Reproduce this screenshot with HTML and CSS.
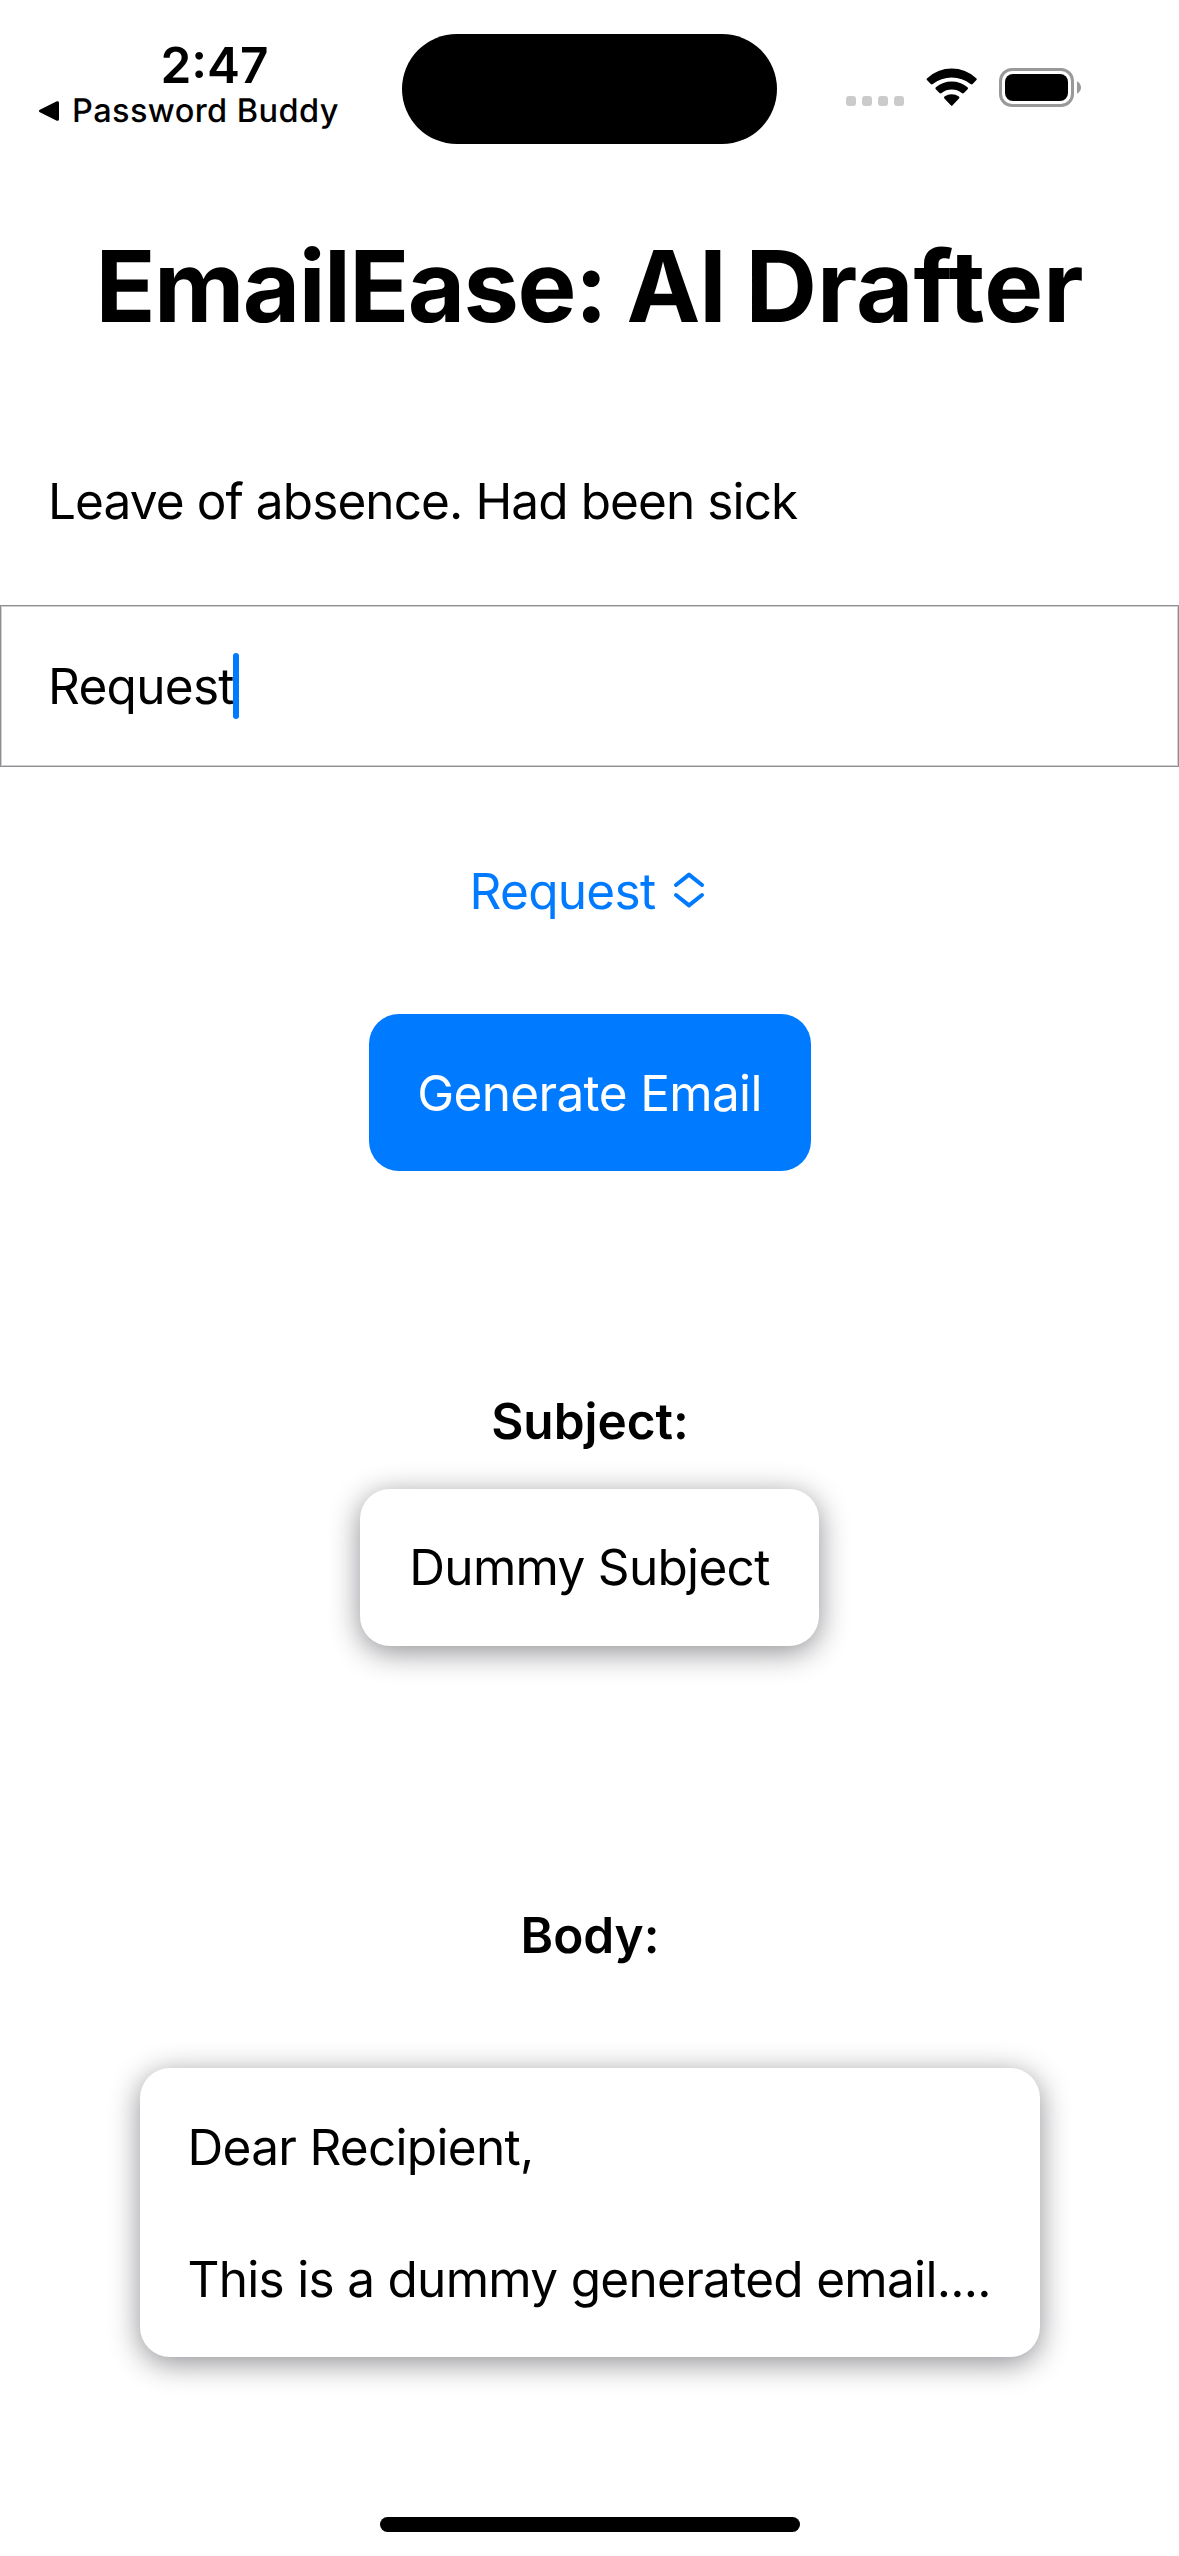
FILE: index.html
```
<!DOCTYPE html>
<html lang="en">
<head>
<meta charset="utf-8">
<title>EmailEase: AI Drafter</title>
<link rel="stylesheet" href="styles.css">
</head>
<body>
<div class="screen">
  <header class="status-bar">
    <div class="status-left">
      <div class="clock">2:47</div>
      <div class="back-link">
        <svg class="back-arrow" viewBox="0 0 22 22"><path d="M2.5 11 19.5 2.7V19.3Z" fill="#000" stroke="#000" stroke-width="3" stroke-linejoin="round"/></svg>
        <span>Password Buddy</span>
      </div>
    </div>
    <div class="island"></div>
    <div class="status-icons">
      <svg class="signal" viewBox="0 0 58 10" fill="#cbcbcb"><rect width="10" height="10" rx="3"/><rect x="16" width="10" height="10" rx="3"/><rect x="32" width="10" height="10" rx="3"/><rect x="48" width="10" height="10" rx="3"/></svg>
      <svg class="wifi" viewBox="926 68 51 39">
        <path d="M927.2 80.3Q926 79.2 927.2 78.2A36 36 0 0 1 976.2 78.2Q977.4 79.2 976.2 80.3L972.6 84Q971.7 84.9 970.6 84A30.6 30.6 0 0 0 932.8 84Q931.7 84.9 930.8 84Z"/>
        <path d="M935.8 89.2Q934.8 88.1 935.9 87.2A24.5 24.5 0 0 1 967.5 87.2Q968.6 88.1 967.6 89.2L963.9 93Q962.9 93.9 961.8 93A16.5 16.5 0 0 0 941.6 93Q940.5 93.9 939.5 93Z"/>
        <path d="M944.4 98.4Q943.4 97.4 944.5 96.6A12 12 0 0 1 958.9 96.6Q960 97.4 959 98.4L952.6 105.2Q951.7 106.2 950.8 105.2Z"/>
      </svg>
      <svg class="battery" viewBox="0 0 83 39"><rect x="1.5" y="1.5" width="72" height="36" rx="11.5" fill="none" stroke="#999" stroke-width="3"/><rect x="6" y="6" width="63" height="27" rx="8"/><path d="M78 13.2Q82 15.5 82 19.5T78 25.8Z" fill="#999"/></svg>
    </div>
  </header>

  <main class="content">
    <h1 class="title">EmailEase: AI <span class="title-end">Drafter</span></h1>
    <p class="prompt">Leave of absence. Had been sick</p>
    <div class="field"><span>Request</span><i class="caret"></i></div>
    <div class="picker">
      <span>Request</span>
      <svg class="chevrons" viewBox="0 0 32 36" fill="none" stroke="#007aff" stroke-width="4" stroke-linecap="round" stroke-linejoin="round"><path d="M3 13 16 2.6 29 13M3 23 16 33.4 29 23"/></svg>
    </div>
    <button class="generate">Generate Email</button>
    <h2 class="label label-subject">Subject:</h2>
    <div class="card card-subject">Dummy Subject</div>
    <h2 class="label label-body">Body:</h2>
    <div class="card card-body">Dear Recipient,<br><br>This is a dummy generated email....</div>
  </main>

  <div class="home-indicator"></div>
</div>
</body>
</html>
```
FILE: styles.css
```
* {
  box-sizing: border-box;
  margin: 0;
}

body {
  background: #fff;
  color: #000;
  font: 400 49.5px/66px Inter, sans-serif;
  letter-spacing: -0.7px;
  text-rendering: geometricPrecision;
}

.screen {
  width: 1179px;
  height: 2556px;
  display: flex;
  flex-direction: column;
  align-items: center;
  overflow: hidden;
}

.status-bar {
  width: 100%;
  height: 177px;
  display: flex;
  align-items: flex-start;
}

.status-left {
  width: 402px;
  padding: 35px 0 0 38px;
}

.clock {
  width: 353px;
  text-align: center;
  font-weight: 600;
  line-height: 60px;
  letter-spacing: 0;
}

.back-link {
  display: flex;
  align-items: center;
  gap: 12px;
  font-size: 32.5px;
  font-weight: 500;
  line-height: 32px;
  letter-spacing: 0.42px;
  white-space: nowrap;
}

.back-arrow {
  width: 22px;
  height: 22px;
}

.island {
  width: 375px;
  height: 110px;
  margin-top: 34px;
  border-radius: 55px;
  background: #000;
}

.status-icons {
  display: flex;
  align-items: flex-end;
  margin: 68px 0 0 69px;
}

.signal {
  width: 58px;
  height: 10px;
  margin-bottom: 1px;
}

.wifi {
  width: 51px;
  height: 39px;
  margin: 0 22px;
}

.battery {
  width: 83px;
  height: 39px;
}

.content {
  width: 100%;
  display: flex;
  flex-direction: column;
  align-items: center;
}

.title {
  margin-top: 49px;
  font-size: 99px;
  font-weight: 700;
  line-height: 120px;
  letter-spacing: -1.6px;
  word-spacing: -1.5px;
  white-space: nowrap;
}

.title-end {
  letter-spacing: 0;
}

.prompt {
  width: 100%;
  margin-top: 122px;
  padding-left: 48px;
  letter-spacing: -0.9px;
}

.field {
  width: 100%;
  height: 162px;
  margin-top: 71px;
  padding-left: 47px;
  display: flex;
  align-items: center;
  border: 1px solid #8e8e93;
  box-shadow: inset 0 0 0 1px #d0d0d2;
}

.caret {
  width: 6px;
  height: 66px;
  margin-left: -1px;
  border-radius: 3px;
  background: #007aff;
}

.picker {
  display: flex;
  align-items: center;
  gap: 18px;
  margin: 91px 4px 0 0;
  color: #007aff;
}

.chevrons {
  width: 32px;
  height: 36px;
  position: relative;
  top: -1px;
}

.generate {
  width: 442px;
  height: 157px;
  margin-top: 90px;
  border: 0;
  border-radius: 30px;
  background: #007aff;
  color: #fff;
  font: inherit;
  letter-spacing: -0.65px;
}

.label {
  padding-left: 1px;
  font-size: 49.5px;
  font-weight: 600;
  letter-spacing: 0;
}

.label-subject {
  margin-top: 217px;
}

.card {
  border-radius: 30px;
  background: #fff;
  box-shadow: 0 6px 30px #8e8e93;
}

.card-subject {
  width: 459px;
  height: 157px;
  margin-top: 35px;
  line-height: 157px;
  text-align: center;
}

.label-body {
  margin-top: 256px;
}

.card-body {
  width: 900px;
  height: 289px;
  margin-top: 100px;
  padding: 46px 0 0 48px;
  white-space: nowrap;
}

.home-indicator {
  width: 420px;
  height: 15px;
  margin-top: 160px;
  border-radius: 8px;
  background: #000;
}
```
